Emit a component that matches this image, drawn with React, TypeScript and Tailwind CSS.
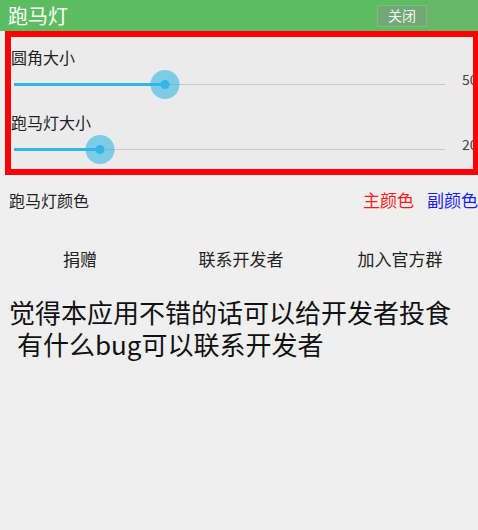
const sliders = [
  { label: '圆角大小', value: 50, thumb: 154 },
  { label: '跑马灯大小', value: 20, thumb: 89 },
];

const links = ['捐赠', '联系开发者', '加入官方群'];

function Slider({ label, value, thumb }: { label: string; value: number; thumb: number }) {
  return (
    <div className="pt-[11px] pb-[5px]">
      <div className="h-[19px] text-[16px] leading-[19px] text-[#222] whitespace-nowrap">{label}</div>
      <div className="relative mt-[4px] h-[26px]">
        <div className="absolute left-[3px] top-[13px] h-px w-[431px] bg-[#c9c9c9]" />
        <div className="absolute left-[3px] top-[12px] h-[3px] bg-[#33b5e5]" style={{ width: thumb - 3 }} />
        <div
          className="absolute top-[-1.5px] flex h-[29px] w-[29px] -translate-x-1/2 items-center justify-center rounded-full bg-[#33b5e5]/60"
          style={{ left: thumb }}
        >
          <div className="h-[9px] w-[9px] rounded-full bg-[#33b5e5]" />
        </div>
        <div className="absolute left-[451px] top-0 text-[14px] leading-[16px] text-[#444]">{value}</div>
      </div>
    </div>
  );
}

export default function App() {
  return (
    <div
      className="h-[530px] w-[478px] overflow-hidden bg-[#efefef]"
      style={{ fontFamily: '"Noto Sans CJK SC", "Noto Sans", sans-serif' }}
    >
      {/* Title bar */}
      <div className="flex h-[31px] items-center bg-[#5bbd5f]">
        <span className="pl-[8px] text-[20px] leading-none text-white">跑马灯</span>
        <div className="ml-auto flex h-[22px] w-[50px] items-center justify-center border border-[#84b784] bg-[#72a873] text-[14px] text-[#f2f2f2]">
          关闭
        </div>
        <div className="h-full w-[51px] bg-[#66b868]" />
      </div>

      {/* Slider panel */}
      <div className="ml-[5px] h-[144px] w-[474px] overflow-hidden border-[6px] border-[#ff0000] bg-[#ebebeb]">
        {sliders.map((s) => (
          <Slider key={s.label} {...s} />
        ))}
      </div>

      {/* Colour row */}
      <div className="flex h-[50px] items-center justify-between pl-[9px]">
        <span className="text-[16px] text-[#222]">跑马灯颜色</span>
        <div className="flex gap-[13px] text-[17px]">
          <span className="text-[#ff1a1a]">主颜色</span>
          <span className="text-[#1a1aff]">副颜色</span>
        </div>
      </div>

      {/* Links */}
      <div className="grid h-[68px] grid-cols-[160px_162px_156px] items-center text-center text-[17px] text-[#222]">
        {links.map((l) => (
          <span key={l}>{l}</span>
        ))}
      </div>

      {/* Note */}
      <div className="mt-[3px] pl-[9px] text-[26px] leading-[32px] text-[#111]">
        <div>觉得本应用不错的话可以给开发者投食</div>
        <div className="pl-[8px]">有什么bug可以联系开发者</div>
      </div>
    </div>
  );
}
